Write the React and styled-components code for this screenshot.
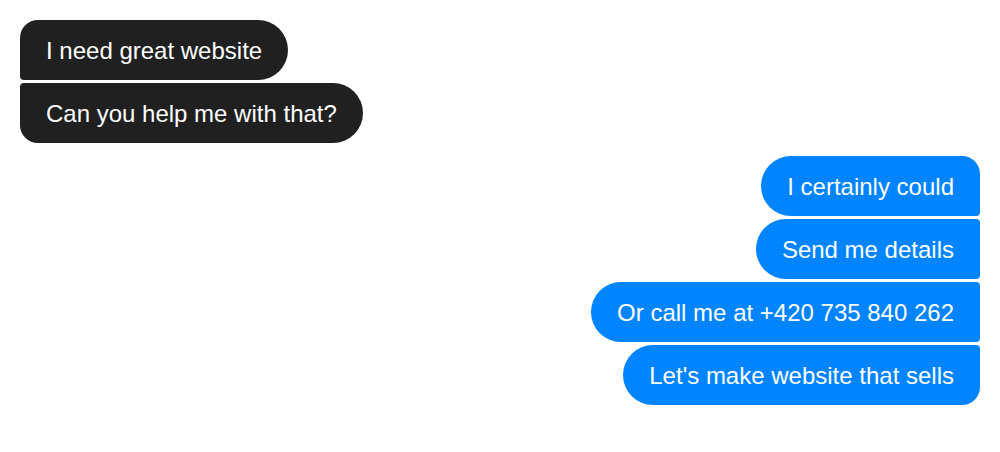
import React from "react";
import styled, { createGlobalStyle, css } from "styled-components";

const Global = createGlobalStyle`
  html, body { margin: 0; padding: 0; background: #ffffff; }
  body { font-family: "Liberation Sans", Arial, sans-serif; }
`;

const Chat = styled.div`
  display: flex;
  flex-direction: column;
  gap: 13px;
  padding: 20px;
`;

const Group = styled.div`
  display: flex;
  flex-direction: column;
  align-items: ${(p) => (p.$mine ? "flex-end" : "flex-start")};
  gap: 3px;
`;

const Bubble = styled.div`
  box-sizing: border-box;
  height: 60px;
  display: flex;
  align-items: center;
  padding: 2px 26px 0;
  font-size: 24px;
  color: #ffffff;
  white-space: nowrap;
  background: ${(p) => (p.$mine ? "#0084ff" : "#202020")};
  ${(p) =>
    p.$mine
      ? css`
          border-radius: 30px ${p.$first ? "18px" : "4px"} ${p.$last ? "18px" : "4px"} 30px;
        `
      : css`
          border-radius: ${p.$first ? "18px" : "4px"} 30px 30px ${p.$last ? "18px" : "4px"};
        `}
`;

const groups = [
  { mine: false, msgs: ["I need great website", "Can you help me with that?"] },
  {
    mine: true,
    msgs: [
      "I certainly could",
      "Send me details",
      "Or call me at +420 735 840 262",
      "Let's make website that sells",
    ],
  },
];

export default function App() {
  return (
    <>
      <Global />
      <Chat>
        {groups.map((g, gi) => (
          <Group key={gi} $mine={g.mine}>
            {g.msgs.map((m, i) => (
              <Bubble
                key={i}
                $mine={g.mine}
                $first={i === 0}
                $last={i === g.msgs.length - 1}
              >
                {m}
              </Bubble>
            ))}
          </Group>
        ))}
      </Chat>
    </>
  );
}
